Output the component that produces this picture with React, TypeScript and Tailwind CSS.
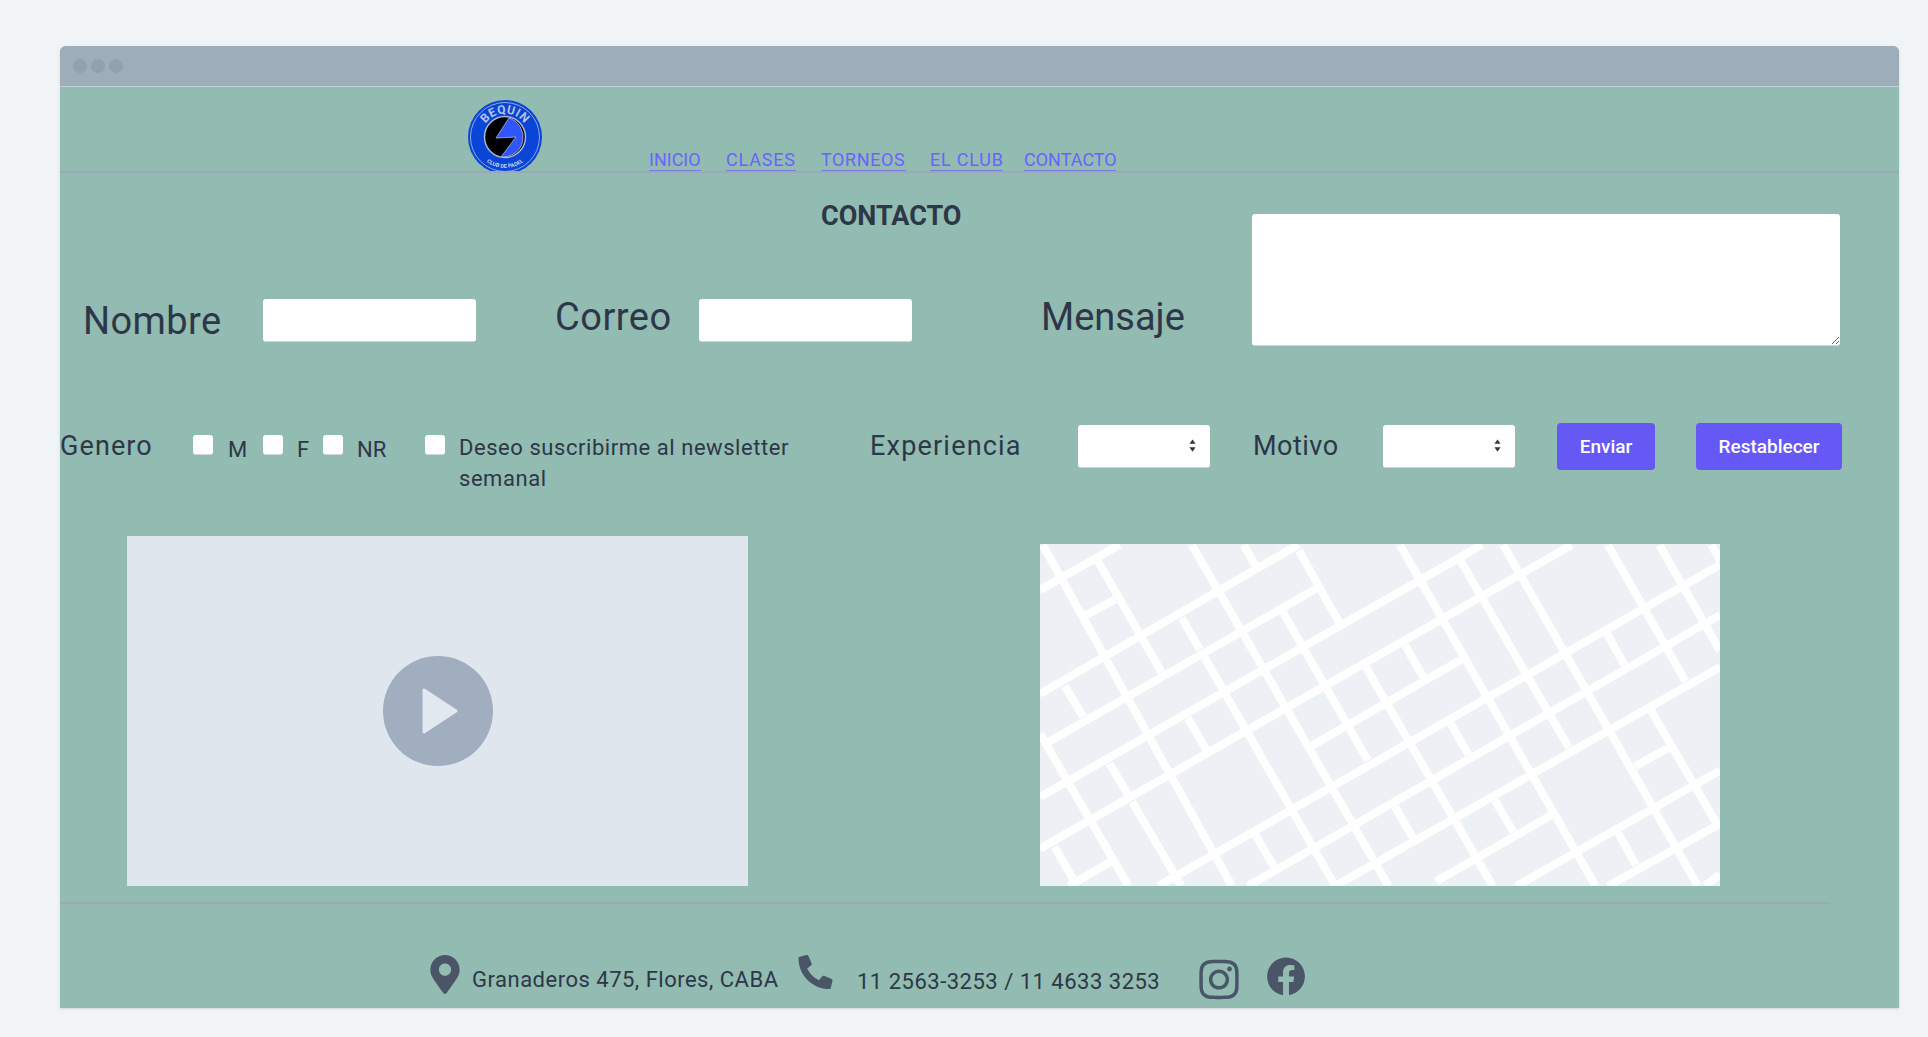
import { FaFacebook, FaInstagram, FaMapMarkerAlt, FaPhoneAlt } from "react-icons/fa";

// calles del mapa, en las coordenadas de un recorte de 1481x1027
const roads = [
  [22, 183, 195, 47], [22, 495, 585, 47], [113, 265, 185, 212], [40, 640, 625, 178],
  [22, 805, 985, 47], [22, 960, 1180, 48], [85, 1072, 175, 1000], [280, 1072, 1503, 107],
  [475, 1072, 1503, 258], [665, 1072, 1503, 415], [885, 1058, 1135, 860], [1060, 1072, 1503, 725],
  [1260, 1072, 1503, 885], [1318, 712, 1390, 658], [1470, 1072, 1503, 1038], [615, 650, 940, 392],
  [28, 48, 440, 1072], [148, 97, 287, 430], [353, 48, 781, 1072], [466, 48, 492, 112],
  [586, 65, 673, 280], [331, 268, 370, 362], [549, 245, 736, 695], [806, 48, 1232, 1072],
  [732, 415, 1008, 1072], [817, 349, 857, 444], [938, 95, 1174, 657], [1031, 48, 1455, 1072],
  [1259, 48, 1428, 457], [1371, 48, 1503, 365], [1485, 48, 1503, 95], [1256, 313, 1295, 408],
  [1353, 545, 1497, 888], [1281, 913, 1320, 1008], [1013, 815, 1053, 910], [916, 583, 955, 677],
  [795, 833, 834, 928], [491, 918, 531, 1013], [344, 568, 384, 663], [173, 704, 214, 798],
  [76, 471, 116, 564], [22, 615, 215, 1072], [54, 955, 94, 1050], [223, 820, 330, 1072],
  [380, 385, 665, 1072],
];

const links = [
  { label: "INICIO", className: "w-[52px]" },
  { label: "CLASES", className: "ml-[25px] w-[70px] tracking-[0.8px]" },
  { label: "TORNEOS", className: "ml-[25px] w-[85px] tracking-[0.6px]" },
  { label: "EL CLUB", className: "ml-[24px] w-[73px] tracking-[0.8px]" },
  { label: "CONTACTO", className: "ml-[21px] w-[92px]" },
];

function Logo() {
  return (
    <svg viewBox="0 0 74 76" className="w-[74px] h-[76px] shrink-0">
      <circle cx="37" cy="37" r="37" fill="#0a45d8" />
      <circle cx="37" cy="37" r="34.5" fill="none" stroke="#8fa8e0" strokeWidth="1" />
      <circle cx="37" cy="37" r="20.5" fill="#000" stroke="#a9b8d8" strokeWidth="1.5" />
      <path d="M41 18 A20 20 0 0 1 33 57 L48 37 L28 38 Z" fill="#2f55ff" stroke="#a9b8d8" strokeWidth="0.8" />
      <path id="logo-top" d="M13.5 37 A23.5 23.5 0 0 1 60.5 37" fill="none" />
      <path id="logo-bottom" d="M6 37 A31 31 0 0 0 68 37" fill="none" />
      <text fontSize="12" fontWeight="700" fill="#b5c4e0" letterSpacing="0.5">
        <textPath href="#logo-top" startOffset="50%" textAnchor="middle">BEQUIN</textPath>
      </text>
      <text fontSize="5.5" fontWeight="700" fill="#c5d2ea">
        <textPath href="#logo-bottom" startOffset="50%" textAnchor="middle">CLUB DE PADEL</textPath>
      </text>
    </svg>
  );
}

function Select({ className }: { className: string }) {
  return (
    <div className={`relative w-[132px] h-[43px] ${className}`}>
      <select className="appearance-none w-full h-full bg-white rounded-[3px] border-b border-[#cbd5e0]" />
      <svg viewBox="0 0 8 14" className="absolute right-[14px] top-[14px] w-[7px] h-[13px]">
        <path d="M4 0 L7.5 5 H0.5 Z M4 14 L7.5 9 H0.5 Z" fill="#2d3748" />
      </svg>
    </div>
  );
}

function Check({ className }: { className: string }) {
  return <input type="checkbox" className={`appearance-none w-5 h-5 shrink-0 bg-white rounded-[3px] border-b border-[#cbd5e0] ${className}`} />;
}

export default function App() {
  return (
    <div className="min-h-screen bg-[#f0f4f7] pt-[46px] pl-[60px] font-[Roboto,sans-serif] text-[#2d3748]">
      <div className="w-[1839px] h-[962px] bg-[#92bbb1] rounded-t-md overflow-hidden shadow-sm">
        <div className="h-[41px] flex items-center gap-1 pl-[13px] bg-[#9eadba] border-b border-[#c3d0d3]">
          <div className="w-[14px] h-[14px] rounded-full bg-[#92a0af]" />
          <div className="w-[14px] h-[14px] rounded-full bg-[#92a0af]" />
          <div className="w-[14px] h-[14px] rounded-full bg-[#92a0af]" />
        </div>

        <header className="h-[86px] flex overflow-hidden border-b-2 border-[#9ba9b6] pt-[13px] pl-[408px]">
          <Logo />
          <nav className="flex ml-[107px] mt-[49px] h-[22px]">
            {links.map((link) => (
              <a key={link.label} href="#" className={`text-[18px] leading-[21px] whitespace-nowrap text-[#6c63ff] border-b border-[#7b78e8] ${link.className}`}>
                {link.label}
              </a>
            ))}
          </nav>
        </header>

        <div className="flex h-[173px]">
          <div className="w-[1192px] shrink-0">
            <h1 className="ml-[761px] mt-[27px] text-[27px] leading-[32px] font-bold whitespace-nowrap">CONTACTO</h1>
            <div className="flex items-center mt-[67px] h-[43px]">
              <label className="ml-[23px] w-[180px] text-[38px] leading-[44px] tracking-[0.4px]">Nombre</label>
              <input className="w-[213px] h-[43px] bg-white rounded-[3px] border-b border-[#cbd5e0]" />
              <label className="ml-[79px] w-[144px] text-[38px] leading-[44px] tracking-[0.5px] mb-[8px]">Correo</label>
              <input className="w-[213px] h-[43px] bg-white rounded-[3px] border-b border-[#cbd5e0]" />
              <label className="ml-[129px] text-[38px] leading-[44px] mb-[8px]">Mensaje</label>
            </div>
          </div>
          <textarea className="mt-[41px] w-[588px] h-[132px] bg-white rounded-[3px] border-b border-[#cbd5e0]" />
        </div>

        <div className="flex items-start h-[113px] mt-[77px]">
          <span className="mt-[7px] w-[133px] text-[27px] leading-[32px] tracking-[1.1px]">Genero</span>
          <Check className="mt-[12px]" />
          <span className="ml-[15px] mt-[11px] w-[35px] text-[22px] leading-[31px]">M</span>
          <Check className="mt-[12px]" />
          <span className="ml-[14px] mt-[11px] w-[26px] text-[22px] leading-[31px]">F</span>
          <Check className="mt-[12px]" />
          <span className="ml-[14px] mt-[11px] w-[68px] text-[22px] leading-[31px]">NR</span>
          <Check className="mt-[12px]" />
          <span className="ml-[14px] mt-[9px] w-[350px] text-[22px] leading-[31px] tracking-[0.55px]">Deseo suscribirme al newsletter semanal</span>
          <span className="ml-[61px] mt-[7px] w-[208px] text-[27px] leading-[32px] tracking-[1.2px]">Experiencia</span>
          <Select className="mt-[2px]" />
          <span className="ml-[43px] mt-[7px] w-[130px] text-[27px] leading-[32px] tracking-[0.5px]">Motivo</span>
          <Select className="mt-[2px]" />
          <button className="ml-[42px] w-[98px] h-[47px] pt-[1px] rounded-[4px] bg-[#6558f5] text-white text-[19px] font-medium">Enviar</button>
          <button className="ml-[41px] w-[146px] h-[47px] pt-[1px] rounded-[4px] bg-[#6558f5] text-white text-[19px] font-medium">Restablecer</button>
        </div>

        <div className="flex items-end">
          <div className="ml-[67px] w-[621px] h-[350px] bg-[#e0e6ed] flex items-center justify-center">
            <div className="w-[110px] h-[110px] rounded-full bg-[#a0aec0] flex items-center justify-center">
              <svg viewBox="0 0 36 46" className="w-[36px] h-[46px] ml-[5px]">
                <path d="M2 2 L34 23 L2 44 Z" fill="#e2e8f0" stroke="#e2e8f0" strokeWidth="3" strokeLinejoin="round" />
              </svg>
            </div>
          </div>
          <svg viewBox="22 45 1481 1027" preserveAspectRatio="none" className="ml-[292px] w-[680px] h-[342px] bg-[#edf0f5]">
            {roads.map((r, i) => (
              <line key={i} x1={r[0]} y1={r[1]} x2={r[2]} y2={r[3]} stroke="#fff" strokeWidth="8" vectorEffect="non-scaling-stroke" />
            ))}
          </svg>
        </div>

        <div className="w-[1771px] mt-4 border-t-2 border-[#9ba9b6]" />

        <footer className="flex items-start pl-[370px] text-[22px] leading-[26px] text-[#2d3748]">
          <FaMapMarkerAlt className="mt-[51px] w-[30px] h-[39px] text-[#4a5568]" />
          <span className="ml-[12px] mt-[63px] w-[306px] whitespace-nowrap tracking-[0.5px]">Granaderos 475, Flores, CABA</span>
          <FaPhoneAlt className="ml-[20px] mt-[51px] w-[35px] h-[34px] text-[#4a5568]" />
          <span className="ml-[24px] mt-[65px] w-[303px] whitespace-nowrap tracking-[0.5px]">11 2563-3253 / 11 4633 3253</span>
          <FaInstagram className="ml-[37px] mt-[53px] w-[44px] h-[45px] text-[#4a5568]" />
          <FaFacebook className="ml-[25px] mt-[53px] w-[40px] h-[39px] text-[#4a5568]" />
        </footer>
      </div>
    </div>
  );
}
